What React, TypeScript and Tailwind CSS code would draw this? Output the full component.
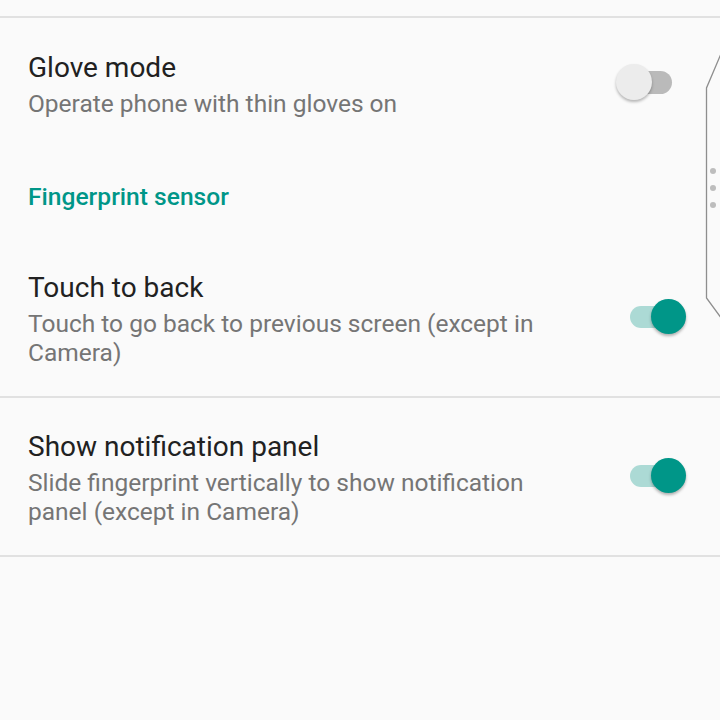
import React from "react";

function Toggle({ on }: { on: boolean }) {
  return (
    <div className="relative w-[70px] h-[36px] shrink-0">
      <div
        className={
          on
            ? "absolute left-[14px] top-[7px] w-[40px] h-[22px] rounded-full bg-[#acdad5]"
            : "absolute left-[16px] top-[7px] w-[40px] h-[23px] rounded-full bg-[#bababa]"
        }
      />
      <div
        className={
          on
            ? "absolute left-[35px] top-0 w-[35px] h-[35px] rounded-full bg-[#009688] shadow-[0_2px_3px_rgba(0,0,0,0.3)]"
            : "absolute left-0 top-0 w-[36px] h-[36px] rounded-full bg-[#ececec] shadow-[0_2px_3px_rgba(0,0,0,0.28)]"
        }
      />
    </div>
  );
}

function Row({
  title,
  subtitle,
  on,
}: {
  title: string;
  subtitle: string;
  on: boolean;
}) {
  return (
    <div className="flex items-center gap-[40px] pl-[28px] pr-[34px] pt-[35px] pb-[29px] border-b-2 border-[#e1e1e1]">
      <div className="flex-1 flex flex-col -mt-[3px]">
        <div className="text-[28px] leading-[34px] text-[#212121]">{title}</div>
        <div className="mt-[4px] text-[24.5px] leading-[29px] text-[#757575]">{subtitle}</div>
      </div>
      <div className="-mt-[7px]">
        <Toggle on={on} />
      </div>
    </div>
  );
}

export default function App() {
  return (
    <div
      className="relative w-[720px] h-[720px] overflow-hidden bg-[#fafafa]"
      style={{ fontFamily: "Roboto, 'Noto Sans', sans-serif" }}
    >
      <div className="h-[18px] border-b-2 border-[#e1e1e1]" />
      <div className="flex items-center gap-[40px] pl-[28px] pr-[34px] pt-[33px] pb-[29px]">
        <div className="flex-1 flex flex-col">
          <div className="text-[28px] leading-[34px] text-[#212121]">Glove mode</div>
          <div className="mt-[4px] text-[24.5px] leading-[29px] text-[#757575]">
            Operate phone with thin gloves on
          </div>
        </div>
        <div className="-mt-[5px]">
          <Toggle on={false} />
        </div>
      </div>
      <div className="pl-[28px] pt-[35px] pb-[27px] text-[24.6px] leading-[30px] font-medium text-[#009688]">
        Fingerprint sensor
      </div>
      <Row
        title="Touch to back"
        subtitle="Touch to go back to previous screen (except in Camera)"
        on={true}
      />
      <Row
        title="Show notification panel"
        subtitle="Slide fingerprint vertically to show notification panel (except in Camera)"
        on={true}
      />
      <svg
        className="absolute right-0 top-0"
        width="20"
        height="330"
        viewBox="700 0 20 330"
      >
        <polyline
          points="720.5,55 706.5,88 706.5,298 720.5,317"
          fill="none"
          stroke="#8e8e8e"
          strokeWidth="1.3"
        />
        <circle cx="713" cy="171" r="3" fill="#bdbdbd" />
        <circle cx="713" cy="188" r="3" fill="#bdbdbd" />
        <circle cx="713" cy="205" r="3" fill="#bdbdbd" />
      </svg>
    </div>
  );
}
